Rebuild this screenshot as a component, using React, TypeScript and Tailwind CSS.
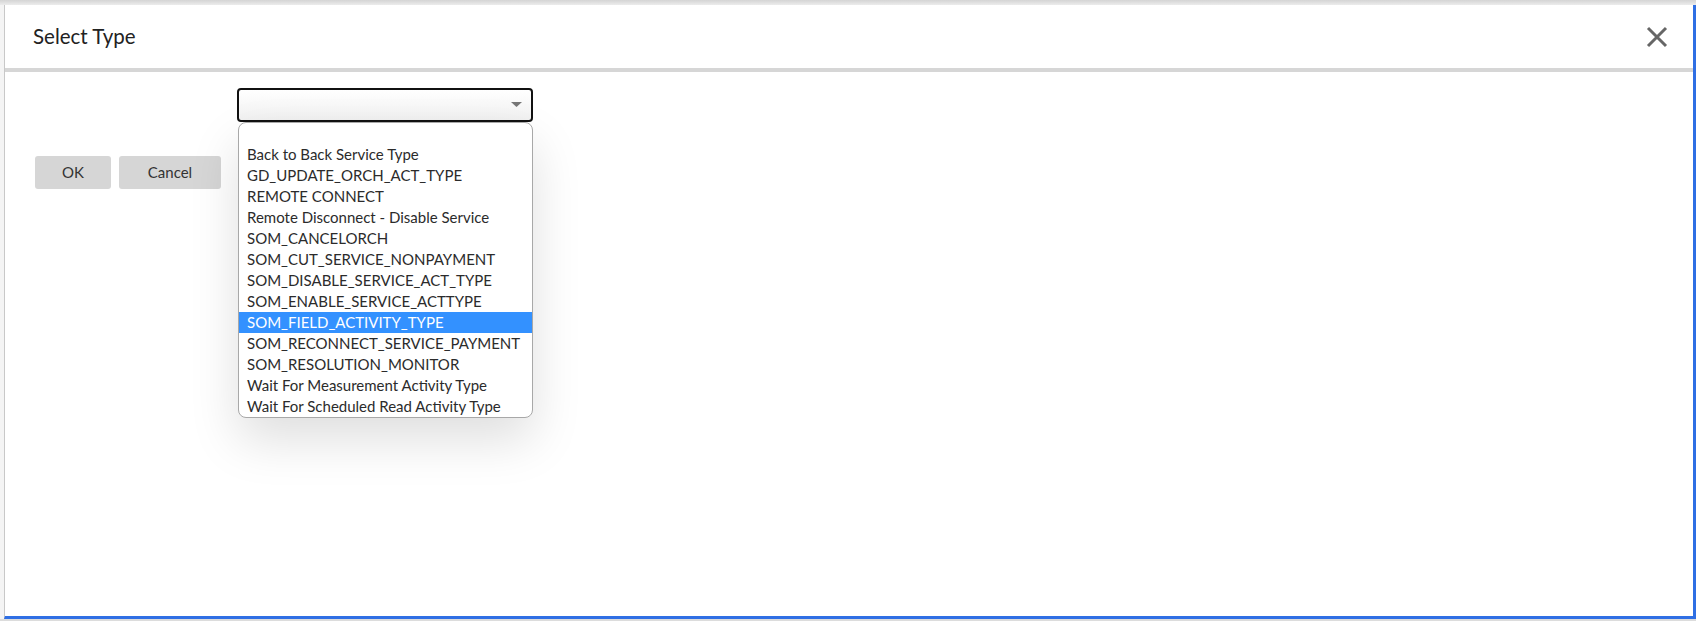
import React from 'react';

const options = [
  '',
  'Back to Back Service Type',
  'GD_UPDATE_ORCH_ACT_TYPE',
  'REMOTE CONNECT',
  'Remote Disconnect - Disable Service',
  'SOM_CANCELORCH',
  'SOM_CUT_SERVICE_NONPAYMENT',
  'SOM_DISABLE_SERVICE_ACT_TYPE',
  'SOM_ENABLE_SERVICE_ACTTYPE',
  'SOM_FIELD_ACTIVITY_TYPE',
  'SOM_RECONNECT_SERVICE_PAYMENT',
  'SOM_RESOLUTION_MONITOR',
  'Wait For Measurement Activity Type',
  'Wait For Scheduled Read Activity Type',
];

const selected = 'SOM_FIELD_ACTIVITY_TYPE';

const App = () => {
  return (
    <div className="w-[1696px] h-[621px] flex flex-col bg-[#dcdcdc] overflow-hidden font-['Lato','Liberation_Sans',sans-serif] text-[#333]">
      {/* top shadow strip */}
      <div className="h-[5px] bg-gradient-to-b from-[#d4d4d4] to-[#ececec]" />

      <div className="flex flex-1 min-h-0">
        {/* page behind the dialog */}
        <div className="w-[4px] bg-[#f4f4f4]" />

        {/* dialog */}
        <div className="flex-1 flex flex-col bg-white border-l border-[#c8c8c8] border-r-[3px] border-b-[3px] border-r-[#2f6fe4] border-b-[#2f6fe4]">
          {/* header */}
          <div className="h-[63px] flex items-center justify-between pl-[28px] pr-[24px]">
            <h1 className="text-[20.5px] text-[#222]">Select Type</h1>
            <button className="w-[24px] h-[24px] flex items-center justify-center" aria-label="Close">
              <svg width="22" height="22" viewBox="0 0 22 22">
                <path d="M2 2 L20 20 M20 2 L2 20" stroke="#666" strokeWidth="3" />
              </svg>
            </button>
          </div>
          <div className="h-[4px] bg-[#d6d6d6]" />

          {/* body */}
          <div className="pt-[16px] pl-[30px]">
            <div className="ml-[202px] relative w-[296px] z-10">
              <div className="h-[34px] border-2 border-[#111] rounded-[4px] bg-gradient-to-b from-white to-[#f1f1f1] flex items-center justify-end pr-[9px]">
                <svg width="11" height="6" viewBox="0 0 11 6">
                  <path d="M0 0 L11 0 L5.5 5 Z" fill="#777" />
                </svg>
              </div>

              {/* open listbox */}
              <ul className="absolute left-[1px] top-full w-[295px] h-[296px] overflow-hidden bg-white border border-[#a8a8a8] rounded-[8px] shadow-[0_22px_50px_rgba(0,0,0,0.13)] text-[15px]">
                {options.map((opt, i) => (
                  <li
                    key={i}
                    className={`h-[21px] leading-[21px] pl-[8px] whitespace-nowrap ${
                      opt === selected ? 'bg-[#3391ff] text-white' : 'text-[#2b2b2b]'
                    }`}
                  >
                    {opt}
                  </li>
                ))}
              </ul>
            </div>

            <div className="flex gap-[8px] mt-[34px]">
              <button className="w-[76px] h-[33px] bg-[#d6d6d6] rounded-[3px] text-[15px] text-[#333]">OK</button>
              <button className="w-[102px] h-[33px] bg-[#d6d6d6] rounded-[3px] text-[15px] text-[#333]">Cancel</button>
            </div>
          </div>
        </div>
      </div>
      <div className="h-[2px]" />
    </div>
  );
};

export default App;
